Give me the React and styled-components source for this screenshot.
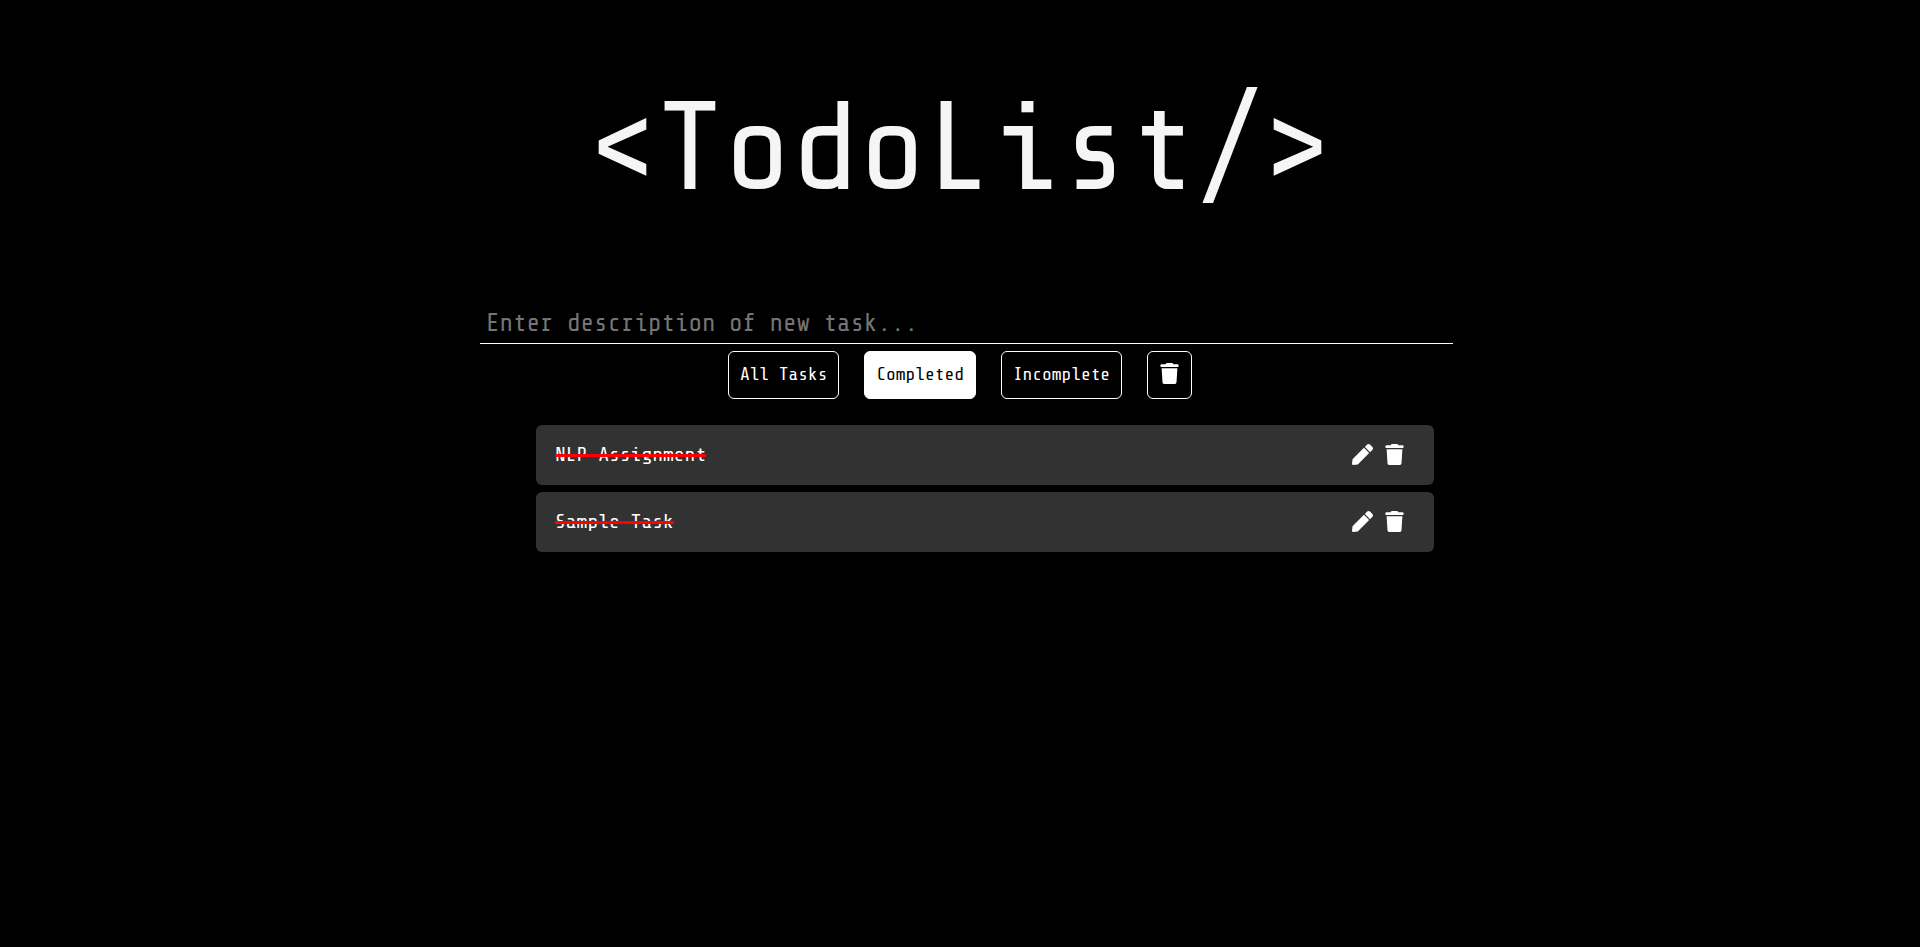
import React, { useState } from "react";
import styled, { createGlobalStyle } from "styled-components";
import { FaPen } from "react-icons/fa";
import { FaTrash } from "react-icons/fa6";

const GlobalStyle = createGlobalStyle`
  *, *::before, *::after { box-sizing: border-box; }
  body {
    margin: 0;
    background: #000;
    color: #fff;
    font-family: "Share Tech Mono", "DejaVu Sans Mono", monospace;
  }
`;

const Page = styled.main`
  display: flex;
  flex-direction: column;
  min-height: 100vh;
`;

const Title = styled.h1`
  margin: 80px 0 78px;
  color: whitesmoke;
  font-size: 125px;
  font-weight: 400;
  line-height: 138px;
  text-align: center;
`;

const TaskForm = styled.form`
  width: 50%;
  margin: 0 auto;
`;

const TaskInput = styled.input`
  display: block;
  width: calc(100% + 13px);
  height: 48px;
  padding: 14px 6px 8px;
  border: 0;
  border-bottom: 1px solid #fff;
  outline: none;
  background: transparent;
  color: #fff;
  font-family: inherit;
  font-size: 25px;

  &::placeholder { color: #757575; opacity: 1; }
`;

const Filters = styled.div`
  display: flex;
  justify-content: center;
  gap: 25px;
  margin-top: 7px;
`;

const FilterButton = styled.button`
  display: flex;
  align-items: center;
  height: 48px;
  padding: ${({ $icon }) => ($icon ? "0 12px 4px" : "0 11px 2px")};
  border: 1px solid #fff;
  border-radius: 6px;
  background: ${({ $active }) => ($active ? "#fff" : "#000")};
  color: ${({ $active }) => ($active ? "#000" : "#fff")};
  font-family: inherit;
  font-size: 18px;
  cursor: pointer;
`;

const TaskList = styled.ul`
  display: flex;
  flex-direction: column;
  gap: 7px;
  width: 50%;
  margin: 26px auto 0;
  padding: 0 6px 0 56px;
  list-style: none;
`;

const TaskRow = styled.li`
  display: flex;
  align-items: center;
  gap: 12px;
  height: 60px;
  padding: 0 30px 0 19px;
  border-radius: 6px;
  background: #323232;
`;

const TaskName = styled.span`
  margin-right: auto;
  font-size: 20px;
  line-height: 24px;
  text-decoration: ${({ $done }) => ($done ? "line-through 3px red" : "none")};
`;

const IconButton = styled.button`
  display: flex;
  padding: 0 0 2px;
  border: 0;
  background: none;
  color: #fff;
  cursor: pointer;
`;

const PenIcon = styled(FaPen)`
  width: 21px;
  height: 21px;
`;

const TrashIcon = styled(FaTrash)`
  width: 19px;
  height: 21px;
`;

const filters = ["All Tasks", "Completed", "Incomplete"];

const initialTasks = [
  { id: 1, name: "NLP Assignment", done: true },
  { id: 2, name: "Sample Task", done: true },
];

export default function App() {
  const [filter, setFilter] = useState("Completed");
  const [tasks, setTasks] = useState(initialTasks);
  const [draft, setDraft] = useState("");

  const visible = tasks.filter(
    (task) => filter === "All Tasks" || task.done === (filter === "Completed")
  );

  const addTask = (event) => {
    event.preventDefault();
    if (!draft.trim()) return;
    setTasks([...tasks, { id: Date.now(), name: draft.trim(), done: false }]);
    setDraft("");
  };

  return (
    <Page>
      <GlobalStyle />
      <Title>{"<TodoList/>"}</Title>
      <TaskForm onSubmit={addTask}>
        <TaskInput
          type="text"
          aria-label="New task"
          placeholder="Enter description of new task..."
          value={draft}
          onChange={(event) => setDraft(event.target.value)}
        />
      </TaskForm>
      <Filters>
        {filters.map((name) => (
          <FilterButton
            key={name}
            type="button"
            $active={filter === name}
            aria-pressed={filter === name}
            onClick={() => setFilter(name)}
          >
            {name}
          </FilterButton>
        ))}
        <FilterButton type="button" $icon aria-label="Delete all" onClick={() => setTasks([])}>
          <TrashIcon />
        </FilterButton>
      </Filters>
      <TaskList>
        {visible.map((task) => (
          <TaskRow key={task.id}>
            <TaskName $done={task.done}>{task.name}</TaskName>
            <IconButton type="button" aria-label={`Edit ${task.name}`}>
              <PenIcon />
            </IconButton>
            <IconButton
              type="button"
              aria-label={`Delete ${task.name}`}
              onClick={() => setTasks(tasks.filter(({ id }) => id !== task.id))}
            >
              <TrashIcon />
            </IconButton>
          </TaskRow>
        ))}
      </TaskList>
    </Page>
  );
}
